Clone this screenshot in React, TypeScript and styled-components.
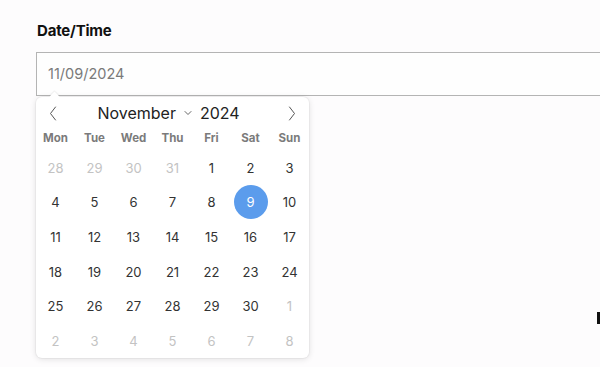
import React from "react";
import styled, { createGlobalStyle, css } from "styled-components";

const GlobalStyle = createGlobalStyle`
  html, body {
    margin: 0;
    padding: 0;
    background: #fdfcfd;
    font-family: Inter, "Noto Sans", "Liberation Sans", sans-serif;
  }
`;

const Page = styled.div`
  position: relative;
  width: 600px;
  height: 367px;
  overflow: hidden;
  padding: 21px 0 0 36px;
  box-sizing: border-box;
`;

const Label = styled.div`
  font-size: 15px;
  font-weight: 700;
  color: #111;
  margin: 0 0 12px 1px;
  letter-spacing: -0.2px;
`;

const Input = styled.div`
  width: 600px;
  height: 44px;
  box-sizing: border-box;
  border: 1.5px solid #b4b4b4;
  display: flex;
  align-items: center;
  padding: 0 0 2px 11px;
  font-size: 14.5px;
  color: #7a7a7a;
  background: #fefefe;
`;

const Popup = styled.div`
  position: absolute;
  left: 36px;
  top: 97px;
  width: 273px;
  height: 261px;
  background: #fff;
  border-radius: 6px;
  box-shadow: 0 1px 6px rgba(0, 0, 0, 0.12), 0 0 0 1px rgba(0, 0, 0, 0.03);
  display: flex;
  flex-direction: column;

  &::before {
    content: "";
    position: absolute;
    top: -4px;
    left: 15px;
    width: 7px;
    height: 7px;
    background: #fff;
    transform: rotate(45deg);
    box-shadow: -1px -1px 1px rgba(0, 0, 0, 0.06);
  }
`;

const Header = styled.div`
  height: 33px;
  padding: 4px 11px 0 11px;
  display: flex;
  align-items: center;
`;

const NavButton = styled.div`
  width: 12px;
  height: 16px;
  display: flex;
  align-items: center;
  justify-content: center;
`;

const Title = styled.div`
  flex: 1;
  display: flex;
  align-items: center;
  justify-content: center;
  gap: 8px;
  font-size: 16px;
  color: #222;
  padding-right: 8px;
`;

const Grid = styled.div`
  display: grid;
  grid-template-columns: repeat(7, 39px);
`;

const WeekDay = styled.div`
  height: 16px;
  padding: 5px 0 4px;
  display: flex;
  align-items: center;
  justify-content: center;
  font-size: 11.5px;
  font-weight: 700;
  color: #7b7b7b;
`;

const Day = styled.div<{ $muted?: boolean; $selected?: boolean }>`
  height: 34.6px;
  display: flex;
  align-items: center;
  justify-content: center;
  font-size: 13px;
  color: ${({ $muted }) => ($muted ? "#c3c3c3" : "#333")};

  ${({ $selected }) =>
    $selected &&
    css`
      & > span {
        width: 34px;
        height: 34px;
        border-radius: 50%;
        background: #5b9cec;
        color: #fff;
        display: flex;
        align-items: center;
        justify-content: center;
      }
    `}
`;

const Cursor = styled.div`
  position: absolute;
  left: 597px;
  top: 312px;
  width: 3px;
  height: 12px;
  background: #111;
`;

const weekDays = ["Mon", "Tue", "Wed", "Thu", "Fri", "Sat", "Sun"];

type Cell = { n: number; muted?: boolean };

const buildDays = (): Cell[] => {
  const cells: Cell[] = [28, 29, 30, 31].map((n) => ({ n, muted: true }));
  for (let i = 1; i <= 30; i++) cells.push({ n: i });
  for (let i = 1; i <= 8; i++) cells.push({ n: i, muted: true });
  return cells;
};

const Chevron = ({ dir }: { dir: "left" | "right" }) => (
  <svg width="8" height="15" viewBox="0 0 8 15" fill="none">
    <path
      d={dir === "left" ? "M6.5 1 L1.5 7.5 L6.5 14" : "M1.5 1 L6.5 7.5 L1.5 14"}
      stroke="#555"
      strokeWidth="1"
      strokeLinecap="round"
      strokeLinejoin="round"
    />
  </svg>
);

const Caret = () => (
  <svg width="8" height="6" viewBox="0 0 8 6" fill="none">
    <path d="M1 1.5 L4 4.5 L7 1.5" stroke="#666" strokeWidth="1" strokeLinecap="round" />
  </svg>
);

const App = () => {
  const days = buildDays();
  return (
    <>
      <GlobalStyle />
      <Page>
        <Label>Date/Time</Label>
        <Input>11/09/2024</Input>
        <Popup>
          <Header>
            <NavButton>
              <Chevron dir="left" />
            </NavButton>
            <Title>
              <span>November</span>
              <Caret />
              <span>2024</span>
            </Title>
            <NavButton>
              <Chevron dir="right" />
            </NavButton>
          </Header>
          <Grid>
            {weekDays.map((d) => (
              <WeekDay key={d}>{d}</WeekDay>
            ))}
            {days.map((c, i) => (
              <Day key={i} $muted={c.muted} $selected={!c.muted && c.n === 9}>
                <span>{c.n}</span>
              </Day>
            ))}
          </Grid>
        </Popup>
        <Cursor />
      </Page>
    </>
  );
};

export default App;
